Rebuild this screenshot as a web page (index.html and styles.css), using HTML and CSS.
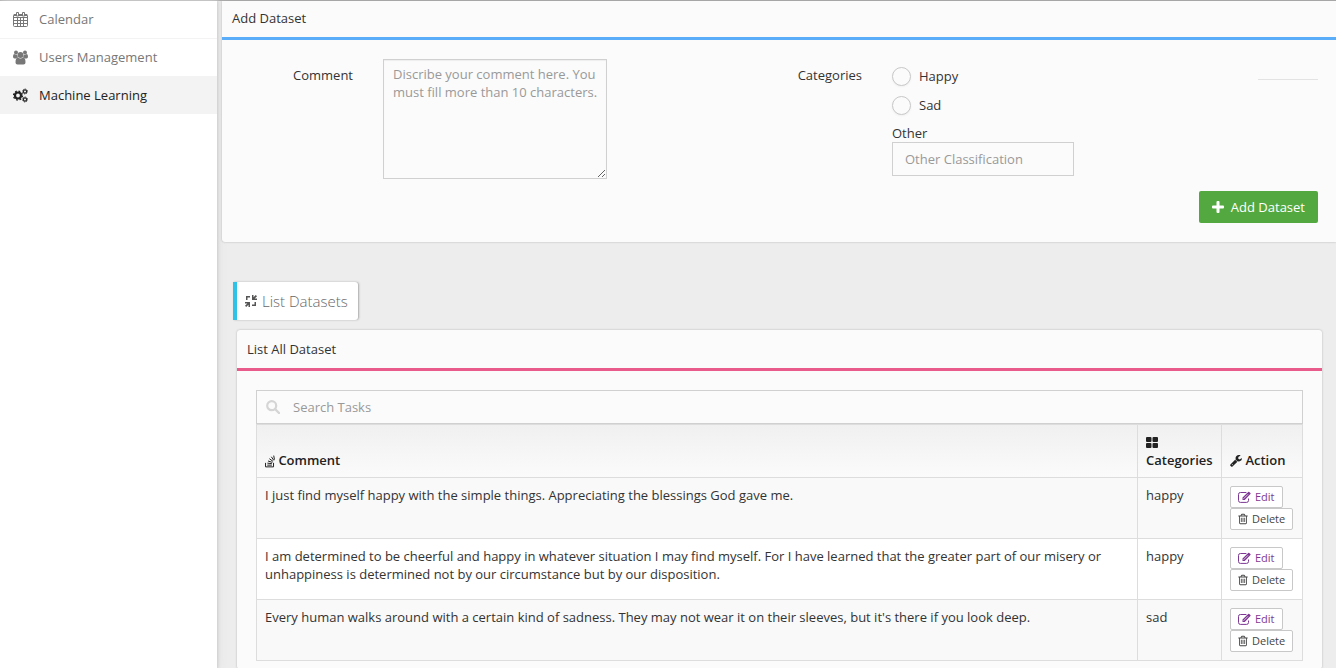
FILE: index.html
```html
<!DOCTYPE html>
<html lang="en">
<head>
<meta charset="utf-8">
<title>Machine Learning</title>
<link rel="stylesheet" href="styles.css">
</head>
<body>
<svg class="defs" aria-hidden="true">
  <symbol id="edit" viewBox="0 0 13 12"><path d="M10.500 7.500v2a1.900 1.900 0 0 1-1.900 1.900H2.400A1.900 1.900 0 0 1 .5 9.500V3.400A1.900 1.900 0 0 1 2.400 1.500h6" fill="none" stroke="currentColor"/><path d="M4.500 9V6.600L10.200.9q.5-.5 1 0l1.200 1.200q.5.5 0 1L6.800 9z"/><path d="M5.500 7.800 10 3.300" stroke="#fff" stroke-width=".7"/></symbol>
  <symbol id="trash" viewBox="192 0 1408 1792"><path d="M704 736v576q0 14-9 23t-23 9h-64q-14 0-23-9t-9-23v-576q0-14 9-23t23-9h64q14 0 23 9t9 23zm256 0v576q0 14-9 23t-23 9h-64q-14 0-23-9t-9-23v-576q0-14 9-23t23-9h64q14 0 23 9t9 23zm256 0v576q0 14-9 23t-23 9h-64q-14 0-23-9t-9-23v-576q0-14 9-23t23-9h64q14 0 23 9t9 23zm128 724v-948h-896v948q0 22 7 40.500t14.500 27 10.500 8.500h832q3 0 10.500-8.500t14.500-27 7-40.500zm-672-1076h448l-48-117q-7-9-17-11h-317q-10 2-17 11zm928 32v64q0 14-9 23t-23 9h-96v948q0 83-47 143.500t-113 60.500h-832q-66 0-113-58.500t-47-141.500v-952h-96q-14 0-23-9t-9-23v-64q0-14 9-23t23-9h309l70-167q15-37 54-63t79-26h320q40 0 79 26t54 63l70 167h309q14 0 23 9t9 23z"/></symbol>
</svg>
<div class="app">
  <nav class="sidebar">
    <a class="nav-item" href="#"><svg class="icon-nav" viewBox="0 0 15 15"><g fill="none" stroke="currentColor"><rect x=".5" y="2.500" width="14" height="12" rx="1"/><path d="M1 5.500h13M1 8.500h13M1 11.500h13M4.500 5.500v9M7.500 5.500v9M10.500 5.500v9"/></g><path d="M1 2h13v2H1z"/><rect x="3" width="3" height="4.500" rx="1"/><rect x="9" width="3" height="4.500" rx="1"/><path d="M4 1h1v2.500H4zM10 1h1v2.500h-1z" fill="#fff"/></svg>Calendar</a>
    <a class="nav-item" href="#"><svg class="icon-nav" viewBox="0 0 15 14"><circle cx="3" cy="2" r="2"/><circle cx="12" cy="2" r="2"/><path d="M0 6q0-2.500 1.200-2.500Q3 4.600 4.300 4q0 2 1 3Q3.800 7 3 8H1.500Q0 8 0 6zM15 6q0-2.500-1.200-2.500Q12 4.600 10.700 4q0 2-1 3 1.500 0 2.300 1h1.500Q15 8 15 6z"/><circle cx="7.500" cy="4.500" r="2.900"/><path d="M2.500 12Q2.500 7 5 7q2.500 2 5 0 2.500 0 2.500 5 0 2-2 2h-6q-2 0-2-2z"/></svg>Users Management</a>
    <a class="nav-item active" href="#"><svg class="icon-nav" viewBox="0 0 15 14"><g fill="none" stroke="currentColor"><circle cx="5" cy="7" r="3" stroke-width="2.200"/><circle cx="5" cy="7" r="4.500" stroke-width="1.300" stroke-dasharray="1.770 1.764"/><circle cx="12" cy="3" r="1.600" stroke-width="1.200"/><circle cx="12" cy="3" r="2.500" stroke-width=".9" stroke-dasharray="1 .963"/><circle cx="12" cy="11" r="1.600" stroke-width="1.200"/><circle cx="12" cy="11" r="2.500" stroke-width=".9" stroke-dasharray="1 .963"/></g></svg>Machine Learning</a>
  </nav>
  <main class="main">
    <section class="panel panel-add">
      <h2 class="panel-title title-blue">Add Dataset</h2>
      <form class="dataset-form">
        <label class="form-label" for="comment">Comment</label>
        <textarea id="comment" class="comment" placeholder="Discribe your comment here. You must fill more than 10 characters."></textarea>
        <span class="form-label" id="cats">Categories</span>
        <div class="category-cell">
          <div class="category-fields" role="group" aria-labelledby="cats">
            <label class="choice"><input class="radio" type="radio" name="category">Happy</label>
            <label class="choice"><input class="radio" type="radio" name="category">Sad</label>
            <label for="other">Other</label>
            <input id="other" class="other" type="text" placeholder="Other Classification">
          </div>
          <hr class="rule">
        </div>
        <button class="add-button" type="button"><svg class="icon-plus" viewBox="0 0 12 12"><path d="M4.500 1q0-1 1-1h1q1 0 1 1v3.500H11q1 0 1 1v1q0 1-1 1H7.500V11q0 1-1 1h-1q-1 0-1-1V7.500H1q-1 0-1-1v-1q0-1 1-1h3.500z"/></svg>Add Dataset</button>
      </form>
    </section>
    <button class="section-tag" type="button"><svg class="icon-compress" viewBox="0 0 12 12"><path d="M1 1h4v1.500H2.500V5H1zM7 0h1.500v2.300L10.800 0 12 1.200 9.700 3.500H12V5H7zM9.500 7H11v4H7V9.500h2.500zM0 7h5v5H3.500V9.700L1.200 12 0 10.800l2.300-2.300H0z"/></svg>List Datasets</button>
    <section class="panel panel-list">
      <h2 class="panel-title title-pink">List All Dataset</h2>
      <div class="list-body">
        <div class="search">
          <svg class="icon-search" viewBox="0 0 14 14"><circle cx="5.700" cy="5.700" r="4.500" fill="none" stroke="currentColor" stroke-width="2.200"/><path d="m9 9 4 4" stroke="currentColor" stroke-width="2.400" stroke-linecap="round"/></svg>
          <input class="search-input" type="text" placeholder="Search Tasks" aria-label="Search Tasks">
        </div>
        <table class="tasks">
          <thead><tr>
            <th class="col-comment"><svg class="icon-stack" viewBox="0 0 11 13"><path d="M.6 8v4.400h8.800V8M2.500 10.500h5M2.600 8.300l5 .6M3.300 5.900l4.800 1.600M4.800 3.400l4.100 3M7 1.300l2.700 4M9.600 0l.8 4.500" fill="none" stroke="currentColor" stroke-width="1.100"/></svg> Comment</th>
            <th class="col-category"><svg class="icon-large" viewBox="0 0 12 11"><rect width="5.500" height="5" rx="1"/><rect x="6.500" width="5.500" height="5" rx="1"/><rect y="6" width="5.500" height="5" rx="1"/><rect x="6.500" y="6" width="5.500" height="5" rx="1"/></svg> Categories</th>
            <th class="col-action"><svg class="icon-wrench" viewBox="64 128 1664 1664"><path d="M448 1472q0-26-19-45t-45-19-45 19-19 45 19 45 45 19 45-19 19-45zm644-420l-682 682q-37 37-90 37-52 0-91-37l-106-108q-38-36-38-90 0-53 38-91l681-681q39 98 114.500 173.500t173.500 114.500zm634-435q0 39-23 106-47 134-164.500 217.500t-258.500 83.500q-185 0-316.500-131.500t-131.500-316.500 131.500-316.500 316.500-131.500q58 0 121.500 16.500t107.500 46.500q16 11 16 28t-16 28l-293 169v224l193 107q5-3 79-48.500t135.500-81 70.500-35.500q15 0 23.500 10t8.500 25z"/></svg> Action</th>
          </tr></thead>
          <tbody>
            <tr><td>I just find myself happy with the simple things. Appreciating the blessings God gave me.</td><td>happy</td><td><div class="actions"><button class="action edit" type="button"><svg class="icon-edit"><use href="#edit"/></svg>Edit</button><button class="action" type="button"><svg class="icon-trash"><use href="#trash"/></svg>Delete</button></div></td></tr>
            <tr><td>I am determined to be cheerful and happy in whatever situation I may find myself. For I have learned that the greater part of our misery or unhappiness is determined not by our circumstance but by our disposition.</td><td>happy</td><td><div class="actions"><button class="action edit" type="button"><svg class="icon-edit"><use href="#edit"/></svg>Edit</button><button class="action" type="button"><svg class="icon-trash"><use href="#trash"/></svg>Delete</button></div></td></tr>
            <tr><td>Every human walks around with a certain kind of sadness. They may not wear it on their sleeves, but it's there if you look deep.</td><td>sad</td><td><div class="actions"><button class="action edit" type="button"><svg class="icon-edit"><use href="#edit"/></svg>Edit</button><button class="action" type="button"><svg class="icon-trash"><use href="#trash"/></svg>Delete</button></div></td></tr>
          </tbody>
        </table>
      </div>
    </section>
  </main>
</div>
</body>
</html>
```
FILE: styles.css
```css
* { box-sizing: border-box; }
body {
  margin: 0;
  font: 13px/18px "Open Sans", sans-serif;
  color: #333;
  background: #ededed;
}
button, input, textarea { font: inherit; color: inherit; }
button { cursor: pointer; }
svg { fill: currentColor; }
.defs { display: none; }
.app { display: flex; min-height: 100vh; border-top: 1px solid #a5a5a5; }

.sidebar {
  flex: 0 0 217px;
  background: #fff;
  box-shadow: 1px 0 3px #ccc, 0 0 10px #ddd;
}
.nav-item {
  display: flex;
  align-items: center;
  gap: 11px;
  height: 38px;
  padding: 0 0 1px 13px;
  border-bottom: 1px solid #f3f3f3;
  color: #777;
  text-decoration: none;
}
.nav-item.active { height: 37px; padding-bottom: 0; color: #222; background: #f3f3f3; }
.icon-nav { width: 15px; height: 15px; }

.main {
  flex: 1;
  min-width: 0;
  display: flex;
  flex-direction: column;
  padding-left: 5px;
}
.panel { background: #fbfbfb; border-radius: 3px; box-shadow: 0 0 2px #aaa; }
.panel-title { margin: 0; padding: 8px 10px 10px; font-size: 13px; font-weight: 400; line-height: 18px; }
.title-blue { border-bottom: 3px solid #5aaef9; }
.title-pink { padding-top: 10px; border-bottom: 3px solid #e95b8b; }
.panel-add { border-radius: 0 0 0 3px; }

.dataset-form {
  display: grid;
  grid-template-columns: 131fr 224fr 225fr 426fr;
  column-gap: 30px;
  row-gap: 12px;
  padding: 19px 18px 19px 0;
}
.form-label { padding-top: 7px; text-align: right; }
.comment {
  width: 100%;
  height: 120px;
  padding: 5px 6px 5px 9px;
  border: 1px solid #d0d0d0;
  background: #fbfbfb;
  box-shadow: inset 0 1px 1px #eee;
}
::placeholder { color: #999; opacity: 1; }
.category-cell { display: flex; justify-content: space-between; }
.category-fields { display: flex; flex-direction: column; padding-top: 7px; }
.choice { display: flex; align-items: center; gap: 8px; height: 20px; margin-bottom: 9px; }
.radio {
  appearance: none;
  width: 19px;
  height: 19px;
  margin: 0;
  border: 1px solid #c8c8c8;
  border-radius: 50%;
  background: #fbfbfb;
  box-shadow: 0 1px 2px #eee;
}
.radio:checked { background: #777; }
.other { width: 182px; height: 34px; padding: 6px 12px; border: 1px solid #d0d0d0; border-radius: 0; background: #fbfbfb; }
.rule { width: 60px; height: 1px; margin: 20px 0 0; border: 0; background: #e3e3e3; }
.add-button {
  grid-column: 1 / -1;
  justify-self: end;
  display: flex;
  align-items: center;
  gap: 7px;
  height: 32px;
  padding: 0 13px;
  border: 0;
  border-radius: 2px;
  background: #53a93f;
  color: #fff;
}
.icon-plus { width: 12px; height: 12px; }

.section-tag {
  align-self: flex-start;
  display: flex;
  align-items: center;
  gap: 5px;
  height: 38px;
  margin: 40px 0 10px 11px;
  padding: 0 10px 0 8px;
  border: 0;
  border-left: 4px solid #2dc3e8;
  border-radius: 0 3px 3px 0;
  background: #fff;
  box-shadow: 1px 0 2px #aaa;
  color: #666;
  font-size: 15px;
  font-weight: 300;
}
.icon-compress { width: 12px; height: 12px; color: #555; }
.panel-list { flex: 1; margin: 0 14px 0 15px; }
.list-body { padding: 19px 19px 8px; }
.search { display: flex; align-items: center; gap: 13px; height: 34px; padding-left: 9px; border: 1px solid #d0d0d0; }
.icon-search { width: 14px; height: 14px; color: #d5d5d5; }
.search-input { flex: 1; min-width: 0; height: 32px; padding: 0; border: 0; background: none; outline: 0; }
.tasks { width: 100%; border-collapse: collapse; table-layout: fixed; }
.tasks th, .tasks td { padding: 8px; border: 1px solid #ddd; text-align: left; vertical-align: top; }
.tasks th { vertical-align: bottom; color: #222; font-weight: 600; }
.tasks thead { background: linear-gradient(#f0f0f0, #fbfbfb); }
.tasks td { background: #fff; }
.tasks tbody tr:nth-child(odd) td { background: #f9f9f9; }
.col-category { width: 84px; }
.col-action { width: 81px; }
.icon-stack { width: 10px; height: 13px; vertical-align: -3px; }
.icon-large { width: 12px; height: 11px; vertical-align: -1px; }
.icon-wrench { width: 12px; height: 12px; vertical-align: -2px; }
.actions { display: flex; flex-direction: column; align-items: flex-start; }
.action {
  display: flex;
  align-items: center;
  gap: 4px;
  height: 22px;
  padding: 0 7px;
  border: 1px solid #c8c8c8;
  border-radius: 2px;
  background: #fff;
  color: #444;
  font-size: 11px;
}
.edit { color: #7e3794; }
.icon-edit { width: 13px; height: 12px; }
.icon-trash { width: 10px; height: 12px; }
```
